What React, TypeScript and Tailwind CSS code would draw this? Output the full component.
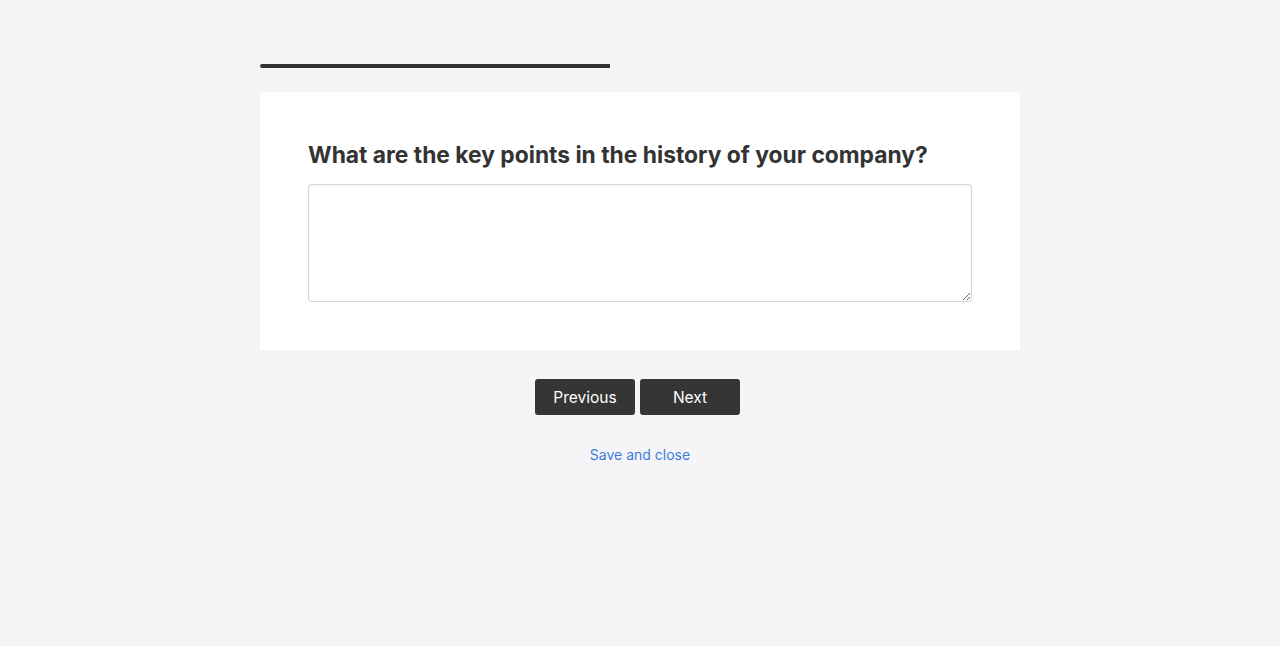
export default function App() {
  return (
    <div className="min-h-[646px] bg-[#f5f5f7] font-['Inter',sans-serif] text-[#333]">
      <div className="mx-auto w-[760px] pt-16">
        <div className="h-1 w-full">
          <div className="h-1 w-[350px] rounded-l-full bg-[#333]" />
        </div>
        <div className="mt-6 bg-white p-12">
          <label className="block text-[22.8px] font-bold leading-[30px]">
            What are the key points in the history of your company?
          </label>
          <textarea className="mt-[14px] block h-[118px] w-full rounded-[3px] border border-[#d6d6d6] bg-white p-2 text-base shadow-[inset_0_1px_2px_rgba(0,0,0,0.06)] outline-none" />
        </div>
        <div className="mt-[29px] flex justify-center gap-[5px] pr-[5px]">
          <button className="h-9 w-[100px] rounded-[3px] bg-[#353535] pt-[2px] text-[15.5px] font-normal text-white">Previous</button>
          <button className="h-9 w-[100px] rounded-[3px] bg-[#353535] pt-[2px] text-[15.5px] font-normal text-white">Next</button>
        </div>
        <div className="mt-[27px] text-center">
          <a href="#" className="text-sm text-[#3b7ddd]">Save and close</a>
        </div>
      </div>
    </div>
  );
}
